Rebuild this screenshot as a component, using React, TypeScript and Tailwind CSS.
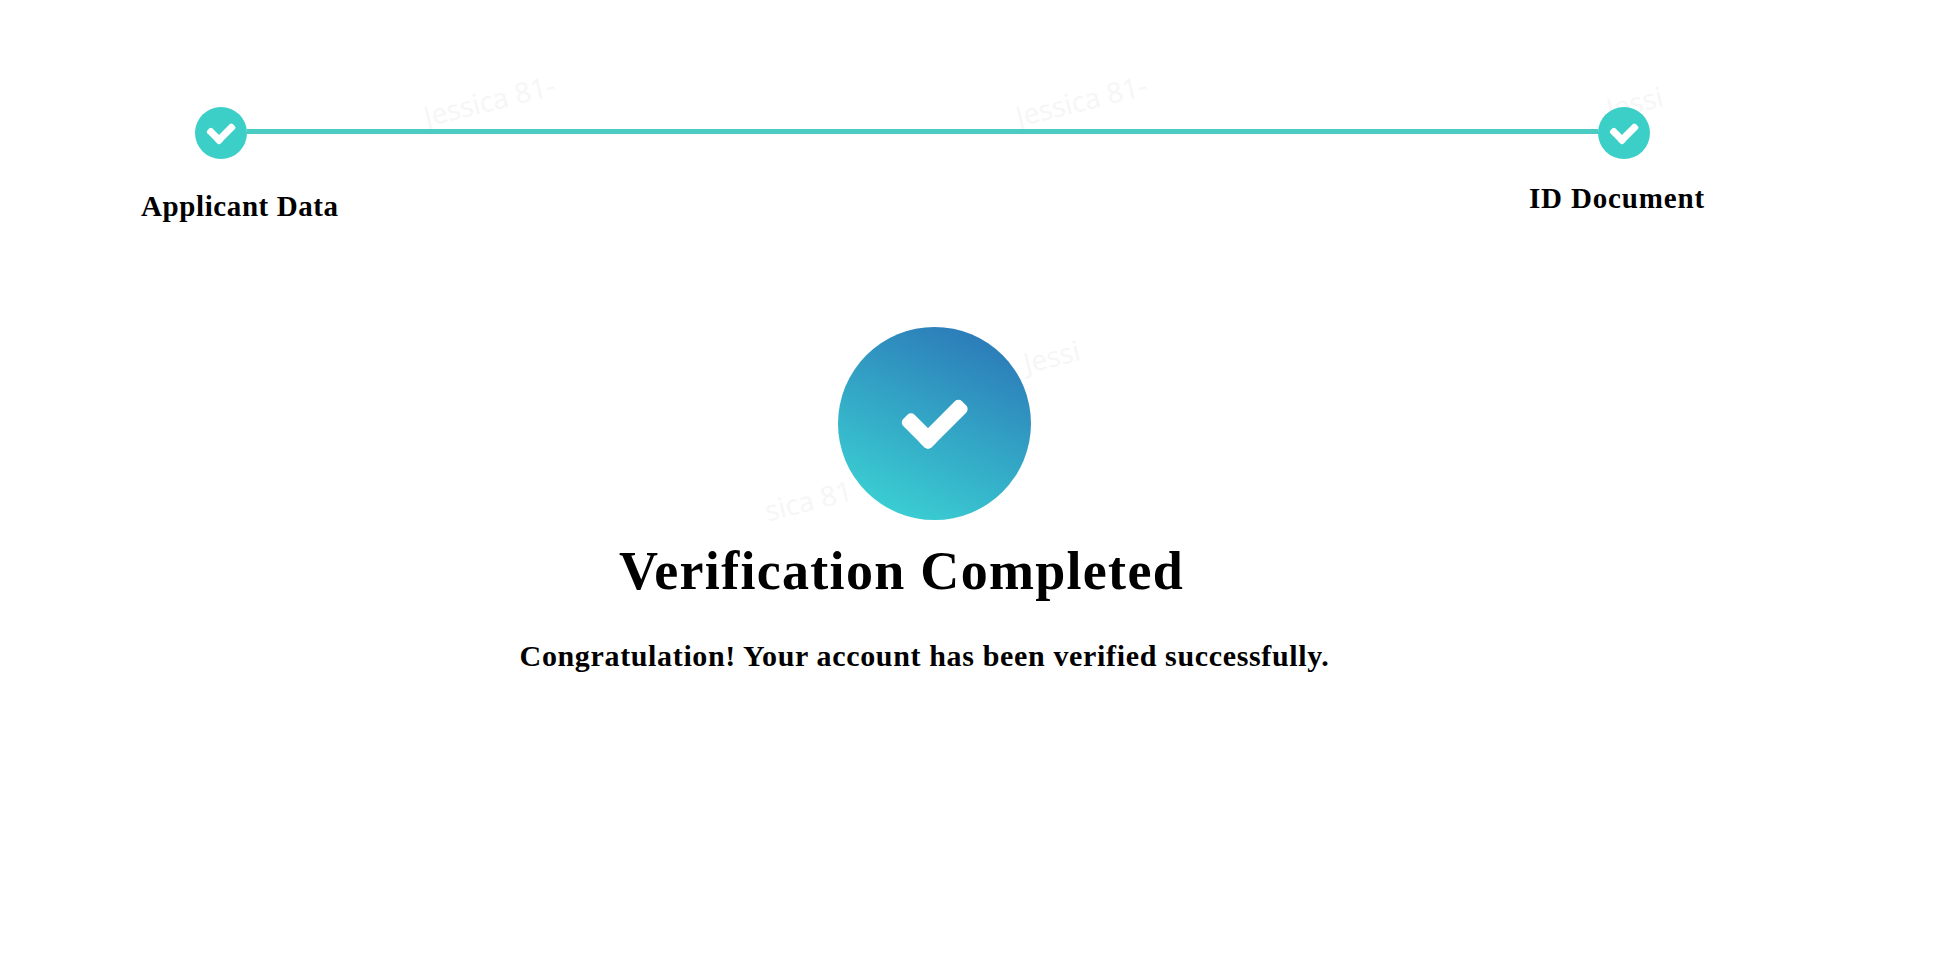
const serif = "font-['Liberation_Serif',serif] font-bold text-black whitespace-nowrap";

function SmallCheck() {
  return (
    <div className="relative z-10 h-[52px] w-[52px] shrink-0 rounded-full bg-[#3bcfc8]">
      <svg viewBox="0 0 52 52" className="h-full w-full">
        <g transform="translate(24 33) rotate(-45)" fill="#fff">
          <rect x={-3.5} y={-3.5} width={24.5} height={7} rx={2} />
          <rect x={-3.5} y={-15} width={7} height={18.5} rx={2} />
        </g>
      </svg>
    </div>
  );
}

function Watermark({ text, className }: { text: string; className: string }) {
  return (
    <span
      className={
        "absolute -rotate-[14deg] font-['Open_Sans',sans-serif] text-[28px] leading-none text-[#f6f6f6] whitespace-nowrap " +
        className
      }
    >
      {text}
    </span>
  );
}

export default function App() {
  return (
    <div className="relative h-[976px] w-[1944px] overflow-hidden bg-white">
      <Watermark text="Jessica 81-" className="left-[422px] top-[86px]" />
      <Watermark text="Jessica 81-" className="left-[1014px] top-[86px]" />
      <Watermark text="Jessi" className="left-[1606px] top-[88px]" />
      <Watermark text="Jessi" className="left-[1023px] top-[342px]" />
      <Watermark text="sica 81" className="left-[764px] top-[486px]" />

      <div className="relative pt-[107px]">
        <div className="ml-[195px] flex w-[1455px] items-center">
          <SmallCheck />
          <div className="mb-[4px] h-[5px] flex-1 bg-[#4ccbc3]" />
          <SmallCheck />
        </div>

        <div className="ml-[141px] mt-[23px] flex w-[1564px] items-start justify-between">
          <div className={serif + " mt-[8px] text-[29px] leading-[32px] tracking-[0.6px]"}>Applicant Data</div>
          <div className={serif + " text-[29px] leading-[32px] tracking-[0.85px]"}>ID Document</div>
        </div>

        <div className="flex w-[1868px] flex-col items-center">
          <div className="mt-[105px] h-[193px] w-[193px] rounded-full bg-[linear-gradient(205deg,#2a70b5,#3cdad6)]">
            <svg viewBox="0 0 193 193" className="h-full w-full">
              <g transform="translate(90 112.5) rotate(-45)" fill="#fff">
                <rect x={-8} y={-8} width={59} height={16} rx={5} />
                <rect x={-8} y={-32} width={16} height={40} rx={5} />
              </g>
            </svg>
          </div>

          <h1 className={serif + " mt-[21px] pr-[65px] text-[54px] leading-[60px] tracking-[1.3px]"}>Verification Completed</h1>
          <p className={serif + " mt-[37px] pr-[19px] text-[30px] leading-[36px] tracking-[0.65px]"}>
            Congratulation! Your account has been verified successfully.
          </p>
        </div>
      </div>
    </div>
  );
}
